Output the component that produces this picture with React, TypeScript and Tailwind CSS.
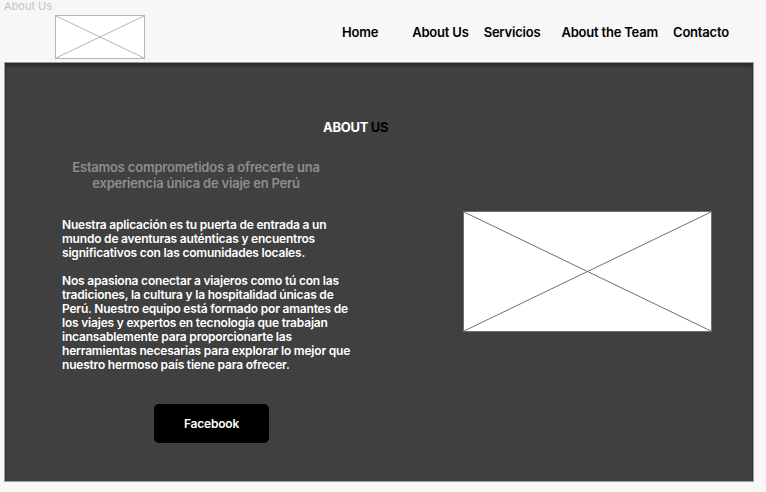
import React from 'react';

const NAV = [
    { label: 'Home', cls: 'ml-0' },
    { label: 'About Us', cls: 'ml-[34px]' },
    { label: 'Servicios', cls: 'ml-[15px]' },
    { label: 'About the Team', cls: 'ml-[21px]' },
    { label: 'Contacto', cls: 'ml-[15px]' },
];

function Placeholder({ className, stroke }: { className: string; stroke: string }) {
    return (
        <div className={`bg-white ${className}`}>
            <svg width="100%" height="100%" preserveAspectRatio="none" viewBox="0 0 100 100">
                <line x1="0" y1="0" x2="100" y2="100" stroke={stroke} strokeWidth="1" vectorEffect="non-scaling-stroke" />
                <line x1="100" y1="0" x2="0" y2="100" stroke={stroke} strokeWidth="1" vectorEffect="non-scaling-stroke" />
            </svg>
        </div>
    );
}

export default function App() {
    return (
        <div className="w-[766px] h-[492px] bg-[#f7f7f7] overflow-hidden font-['Inter',sans-serif] relative">
            <div className="absolute left-[4px] top-0 text-[11px] leading-[12px] text-[#c4c4c4]">About Us</div>

            {/* Header */}
            <header className="h-[62px] flex items-start">
                <Placeholder className="ml-[55px] mt-[15px] w-[90px] h-[44px] border border-[#b5b5b5]" stroke="#b5b5b5" />
                <nav className="ml-[197px] mt-[24px] flex text-[13px] leading-[16px] font-semibold tracking-[-0.2px] text-black">
                    {NAV.map((n) => (
                        <a key={n.label} className={n.cls}>{n.label}</a>
                    ))}
                </nav>
            </header>

            {/* Main panel */}
            <main className="ml-[4px] w-[750px] h-[420px] bg-[#404040] border border-[#9c9c9c] shadow-[inset_0_3px_3px_rgba(0,0,0,0.35)] pt-[56px] pl-[57px]">
                <h1 className="ml-[261px] text-[13px] leading-[16px] font-bold tracking-[-0.3px] text-white">
                    ABOUT <span className="text-black">US</span>
                </h1>
                <div className="flex items-start mt-[24px]">
                    <div className="w-[292px] tracking-[-0.2px]">
                        <p className="w-[268px] text-center text-[13px] leading-[16px] font-semibold text-[#8d8d8d]">
                            Estamos comprometidos a ofrecerte una experiencia única de viaje en Perú
                        </p>
                        <p className="mt-[27px] text-[12px] leading-[14px] font-semibold text-white">
                            Nuestra aplicación es tu puerta de entrada a un mundo de aventuras auténticas y encuentros significativos con las comunidades locales.
                        </p>
                        <p className="mt-[14px] text-[12px] leading-[14px] font-semibold text-white">
                            Nos apasiona conectar a viajeros como tú con las tradiciones, la cultura y la hospitalidad únicas de Perú. Nuestro equipo está formado por amantes de los viajes y expertos en tecnología que trabajan incansablemente para proporcionarte las herramientas necesarias para explorar lo mejor que nuestro hermoso país tiene para ofrecer.
                        </p>
                        <button className="ml-[92px] mt-[32px] w-[115px] h-[39px] bg-black rounded-[5px] text-white text-[12px] font-semibold">
                            Facebook
                        </button>
                    </div>
                    <Placeholder className="ml-[109px] mt-[52px] w-[249px] h-[121px] border border-[#6b6f76]" stroke="#6b6f76" />
                </div>
            </main>
        </div>
    );
}
